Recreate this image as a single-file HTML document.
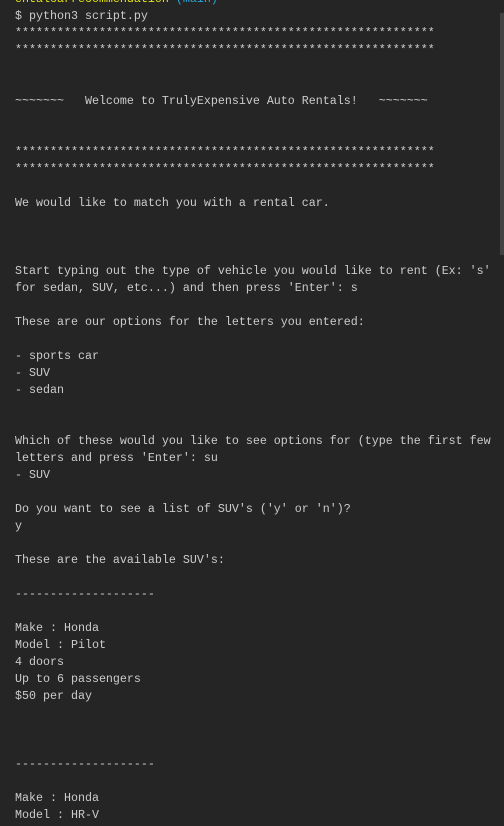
<!DOCTYPE html><html><head><style>
html,body{margin:0;padding:0;background:#252526;width:504px;height:826px;overflow:hidden}
pre{margin:0;position:absolute;left:15px;top:-9.5px;font-family:"Liberation Mono",monospace;font-size:11.67px;line-height:17px;color:#cccccc}
.y{color:#e5e510}.c{color:#2aa7d8}
.sb{position:absolute;left:500px;top:13px;width:4px;height:242px;background:#424242}
</style></head><body>
<pre><span class="y">entalcarrecommendation</span> <span class="c">(main)</span>
$ python3 script.py
************************************************************
************************************************************


~~~~~~~   Welcome to TrulyExpensive Auto Rentals!   ~~~~~~~


************************************************************
************************************************************

We would like to match you with a rental car.



Start typing out the type of vehicle you would like to rent (Ex: 's'
for sedan, SUV, etc...) and then press 'Enter': s

These are our options for the letters you entered:

- sports car
- SUV
- sedan


Which of these would you like to see options for (type the first few
letters and press 'Enter': su
- SUV

Do you want to see a list of SUV's ('y' or 'n')?
y

These are the available SUV's:

--------------------

Make : Honda
Model : Pilot
4 doors
Up to 6 passengers
$50 per day



--------------------

Make : Honda
Model : HR-V</pre>
<div class="sb"></div>
</body></html>
